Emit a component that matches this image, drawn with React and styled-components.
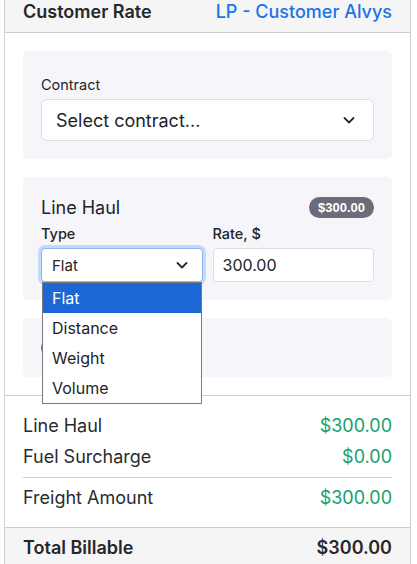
import styled, { createGlobalStyle } from 'styled-components';

const GlobalStyle = createGlobalStyle`
  html, body {
    margin: 0;
    padding: 0;
    background: #ffffff;
    font-family: Inter, "Noto Sans", sans-serif;
    color: #222428;
  }
`;

const Chevron = ({ size = 14 }) => (
  <svg width={size} height={size} viewBox="0 0 16 16" fill="none">
    <path d="M3.5 6 L8 10.5 L12.5 6" stroke="#2a2a2e" strokeWidth="1.8" strokeLinecap="round" strokeLinejoin="round" />
  </svg>
);

function App() {
  return (
    <>
      <GlobalStyle />
      <Panel>
        <Header>
          <Title>Customer Rate</Title>
          <Link>LP - Customer Alvys</Link>
        </Header>
        <Body>
          <Card $top={24}>
            <Label $weight={400}>Contract</Label>
            <BigSelect>
              <span>Select contract...</span>
              <Chevron size={16} />
            </BigSelect>
          </Card>

          <Card>
            <CardHead>
              <CardTitle>Line Haul</CardTitle>
              <Badge>$300.00</Badge>
            </CardHead>
            <Fields>
              <Field>
                <Label>Type</Label>
                <SmallSelect>
                  <span>Flat</span>
                  <Chevron size={16} />
                  <Menu>
                    <Option $active>Flat</Option>
                    <Option>Distance</Option>
                    <Option>Weight</Option>
                    <Option>Volume</Option>
                  </Menu>
                </SmallSelect>
              </Field>
              <Field>
                <Label>Rate, $</Label>
                <Input>300.00</Input>
              </Field>
            </Fields>
          </Card>

          <Card>
            <ToggleRow>
              <Toggle />
            </ToggleRow>
          </Card>
        </Body>

        <Summary>
          <Row>
            <span>Line Haul</span>
            <Money>$300.00</Money>
          </Row>
          <Row>
            <span>Fuel Surcharge</span>
            <Money>$0.00</Money>
          </Row>
          <Divider />
          <Row>
            <span>Freight Amount</span>
            <Money>$300.00</Money>
          </Row>
        </Summary>
        <Total>
          <span>Total Billable</span>
          <span>$300.00</span>
        </Total>
      </Panel>
    </>
  );
}

const Panel = styled.div`
  margin: 0 4px;
  width: 405px;
  min-height: 564px;
  border-left: 1px solid #cfcfcf;
  border-right: 1px solid #cfcfcf;
  display: flex;
  flex-direction: column;
`;

const Header = styled.header`
  height: 32px;
  background: #f5f5f5;
  border-bottom: 1px solid #cfcfcf;
  padding: 0 18px;
  display: flex;
  justify-content: space-between;
  align-items: flex-start;
  line-height: 24px;
  font-size: 18px;
`;

const Title = styled.div`
  font-weight: 600;
  color: #26272b;
`;

const Link = styled.div`
  color: #1a73e8;
  font-weight: 500;
`;

const Body = styled.div`
  padding: 18px 18px;
  display: flex;
  flex-direction: column;
  gap: 18px;
  border-bottom: 1px solid #cfcfcf;
`;

const Card = styled.div`
  background: #f6f6fa;
  border-radius: 5px;
  padding: ${(p) => p.$top || 18}px 18px 18px;
  display: flex;
  flex-direction: column;
`;

const Label = styled.div`
  font-size: 14.5px;
  line-height: 20px;
  font-weight: ${(p) => p.$weight || 500};
  color: #222428;
  margin-bottom: 4px;
`;

const BigSelect = styled.div`
  height: 42px;
  box-sizing: border-box;
  background: #fff;
  border: 1px solid #dedee4;
  border-radius: 6px;
  padding: 0 16px 0 14px;
  display: flex;
  align-items: center;
  justify-content: space-between;
  font-size: 18px;
  color: #222428;
`;

const CardHead = styled.div`
  display: flex;
  justify-content: space-between;
  align-items: center;
  height: 24px;
  margin-bottom: 5px;
`;

const CardTitle = styled.div`
  font-size: 18px;
  font-weight: 400;
  color: #222428;
`;

const Badge = styled.span`
  background: #6c6b78;
  color: #fff;
  font-family: "Liberation Sans", Arial, sans-serif;
  font-weight: 700;
  font-size: 13px;
  height: 21px;
  line-height: 21px;
  padding: 0 9px;
  border-radius: 11px;
`;

const Fields = styled.div`
  display: grid;
  grid-template-columns: 1fr 1fr;
  gap: 10px;
`;

const Field = styled.div`
  display: flex;
  flex-direction: column;
`;

const SmallSelect = styled.div`
  position: relative;
  height: 34px;
  box-sizing: border-box;
  background: #fff;
  border: 1px solid #8fb4f0;
  border-radius: 4px;
  box-shadow: 0 0 0 3px #c4daf9;
  padding: 0 12px 0 10px;
  display: flex;
  align-items: center;
  justify-content: space-between;
  font-size: 15px;
`;

const Menu = styled.div`
  position: absolute;
  top: 33px;
  left: 0;
  width: 160px;
  box-sizing: border-box;
  background: #fff;
  border: 1px solid #7a7a7a;
  z-index: 10;
`;

const Option = styled.div`
  height: 30px;
  line-height: 30px;
  padding: 0 9px;
  font-size: 16px;
  background: ${(p) => (p.$active ? '#1b67d3' : '#fff')};
  color: ${(p) => (p.$active ? '#fff' : '#222428')};
`;

const Input = styled.div`
  height: 34px;
  box-sizing: border-box;
  background: #fff;
  border: 1px solid #dedee4;
  border-radius: 4px;
  padding: 0 9px;
  display: flex;
  align-items: center;
  font-size: 16px;
`;

const ToggleRow = styled.div`
  height: 23px;
  display: flex;
  align-items: center;
`;

const Toggle = styled.span`
  width: 34px;
  height: 18px;
  border-radius: 9px;
  background: #6c6b78;
`;

const Summary = styled.div`
  padding: 14px 18px 14px;
  display: flex;
  flex-direction: column;
`;

const Row = styled.div`
  height: 31px;
  display: flex;
  justify-content: space-between;
  align-items: center;
  font-size: 18px;
  color: #2a2b30;
`;

const Money = styled.span`
  color: #16a06b;
`;

const Divider = styled.div`
  border-top: 1px solid #cfcfcf;
  margin: 5px 0 4px;
`;

const Total = styled.div`
  flex: 1;
  background: #f5f5f5;
  border-top: 1px solid #cfcfcf;
  padding: 8px 18px;
  display: flex;
  justify-content: space-between;
  align-items: flex-start;
  font-size: 18px;
  font-weight: 600;
  line-height: 24px;
  color: #26272b;
`;

export default App;
